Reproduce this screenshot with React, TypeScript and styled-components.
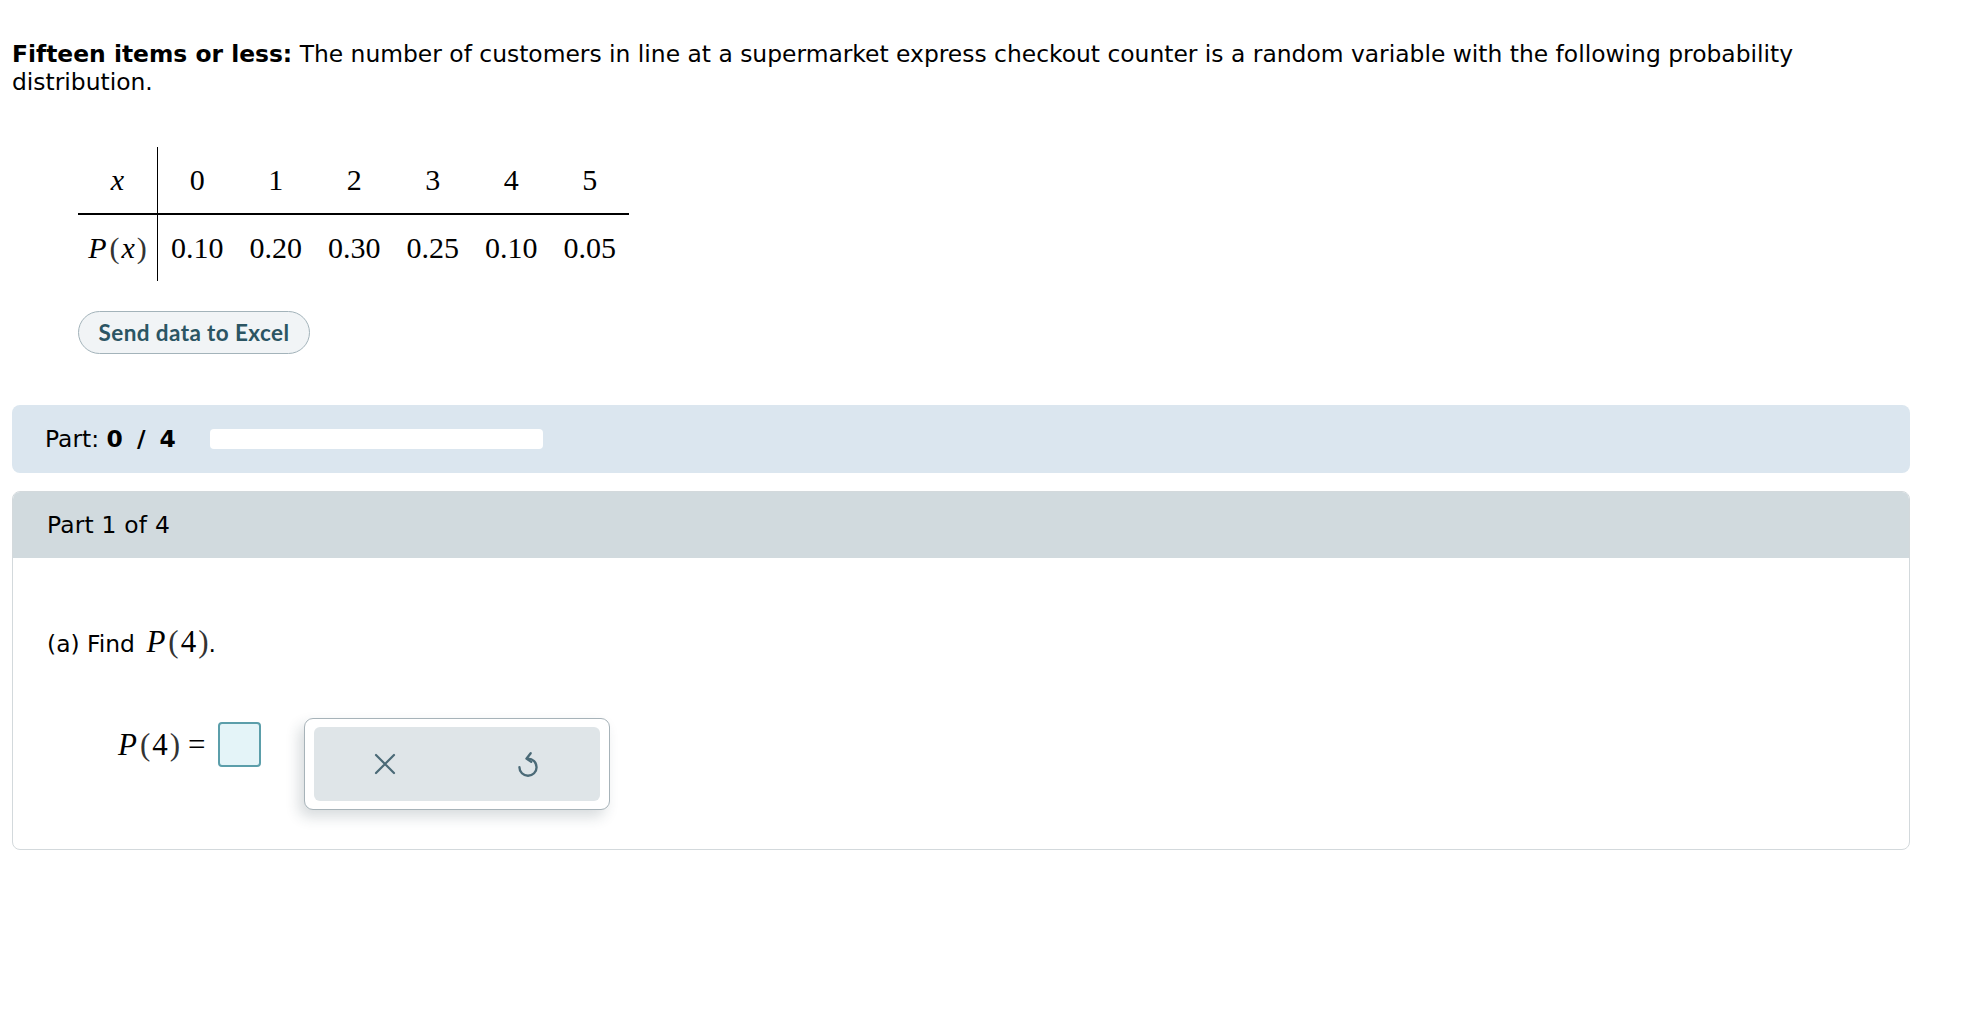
import React from 'react';
import styled, { createGlobalStyle } from 'styled-components';

const Global = createGlobalStyle`
  html, body { margin: 0; padding: 0; background: #ffffff; }
  body { font-family: "DejaVu Sans", Verdana, sans-serif; color: #000; }
`;

const Page = styled.div`
  width: 1898px;
  padding: 41px 0 60px 12px;
`;

const Prompt = styled.p`
  margin: 0;
  font-size: 23.4px;
  line-height: 27.5px;
`;

const Math = styled.span`
  font-family: "Liberation Serif", "Times New Roman", serif;
  font-size: 31px;
  line-height: 1;
  margin-left: 4px;
`;

const Var = styled.i`
  font-style: italic;
  margin-right: 3px;
`;

const Paren = styled.span<{ $open?: boolean }>`
  color: #333;
  margin: ${p => (p.$open ? '0 2px 0 0' : '0 0 0 2px')};
`;

const DistTable = styled.table`
  border-collapse: collapse;
  margin: 51px 0 0 66px;
  font-family: "Liberation Serif", "Times New Roman", serif;
  font-size: 30px;
`;

const Cell = styled.td<{ $head?: boolean; $label?: boolean }>`
  height: 66px;
  padding: 0;
  text-align: center;
  vertical-align: middle;
  white-space: nowrap;
  width: ${p => (p.$label ? '79px' : '78.5px')};
  ${p => (p.$label ? 'border-right: 1px solid #000;' : '')}
  ${p => (p.$head ? 'border-bottom: 2px solid #000;' : '')}
`;

const ExcelButton = styled.button`
  display: block;
  margin: 30px 0 0 66px;
  width: 232px;
  height: 43px;
  padding: 0;
  border: 1px solid #a3b3ba;
  border-radius: 22px;
  background: #f1f4f6;
  color: #2b5563;
  font-family: Lato, "Open Sans", sans-serif;
  font-weight: 700;
  font-size: 22.5px;
  letter-spacing: 0.4px;
`;

const ProgressBar = styled.div`
  margin-top: 51px;
  height: 68px;
  border-radius: 8px;
  background: #dbe6ef;
  padding-left: 33px;
  display: flex;
  align-items: center;
  font-size: 23.4px;
`;

const Bold = styled.b`
  font-weight: 700;
`;

const Fraction = styled.b`
  font-weight: 700;
  letter-spacing: 3px;
`;

const Track = styled.div`
  margin-left: 31px;
  width: 333px;
  height: 20px;
  border-radius: 4px;
  background: #ffffff;
`;

const Card = styled.section`
  margin-top: 18px;
  border: 1px solid #d3d9dc;
  border-radius: 8px;
  overflow: hidden;
`;

const CardHeader = styled.div`
  height: 66px;
  background: #d1dade;
  padding-left: 34px;
  display: flex;
  align-items: center;
  font-size: 23.4px;
  letter-spacing: 0.2px;
`;

const CardBody = styled.div`
  padding: 68px 34px 39px 34px;
`;

const Question = styled.div`
  font-size: 23.4px;
  line-height: 32px;
`;

const AnswerRow = styled.div`
  margin: 58px 0 0 71px;
  display: flex;
  align-items: flex-start;
`;

const Equation = styled.div`
  display: flex;
  align-items: center;
  margin-top: 4px;
  font-family: "Liberation Serif", "Times New Roman", serif;
  font-size: 31px;
`;

const Equals = styled.span`
  margin: 0 12px 0 8px;
`;

const InputBox = styled.div`
  width: 43px;
  height: 45px;
  box-sizing: border-box;
  border: 2px solid #5b9eaa;
  border-radius: 4px;
  background: #e4f4f8;
`;

const ToolPanel = styled.div`
  margin-left: 43px;
  width: 306px;
  height: 92px;
  box-sizing: border-box;
  padding: 8px 9px;
  border: 1px solid #a7b3b9;
  border-radius: 9px;
  background: #ffffff;
  box-shadow: -5px 7px 14px rgba(40, 60, 70, 0.18);
`;

const ToolInner = styled.div`
  height: 100%;
  border-radius: 6px;
  background: #dfe5e8;
  display: grid;
  grid-template-columns: 1fr 1fr;
  align-items: center;
  justify-items: center;
`;

const ToolButton = styled.span`
  display: flex;
  align-items: center;
  justify-content: center;
  width: 30px;
  height: 30px;
`;

const CloseIcon = () => (
  <svg width="22" height="22" viewBox="0 0 22 22" fill="none" stroke="#4b6a77" strokeWidth="2.2" strokeLinecap="round">
    <path d="M2 2 L20 20 M20 2 L2 20" />
  </svg>
);

const UndoIcon = () => (
  <svg width="24" height="30" viewBox="0 0 22 28" fill="none" stroke="#4b6a77" strokeWidth="2.2" strokeLinecap="round" strokeLinejoin="round">
    <path d="M11 9 A8 8 0 1 1 3 17" />
    <path d="M13.5 4 L9.5 9 L14 12" />
  </svg>
);

const xs = ['0', '1', '2', '3', '4', '5'];
const ps = ['0.10', '0.20', '0.30', '0.25', '0.10', '0.05'];

export default function App() {
  return (
    <Page>
      <Global />
      <Prompt>
        <Bold>Fifteen items or less:</Bold> The number of customers in line at a supermarket express checkout counter is a random variable with the following probability distribution.
      </Prompt>
      <DistTable>
        <tbody>
          <tr>
            <Cell $head $label><i>x</i></Cell>
            {xs.map((v, i) => (
              <Cell $head key={i}>{v}</Cell>
            ))}
          </tr>
          <tr>
            <Cell $label><Var>P</Var><Paren $open>(</Paren><i>x</i><Paren>)</Paren></Cell>
            {ps.map((v, i) => (
              <Cell key={i}>{v}</Cell>
            ))}
          </tr>
        </tbody>
      </DistTable>
      <ExcelButton>Send data to Excel</ExcelButton>
      <ProgressBar>
        <span>Part: <Fraction>0 / 4</Fraction></span>
        <Track />
      </ProgressBar>
      <Card>
        <CardHeader>Part 1 of 4</CardHeader>
        <CardBody>
          <Question>
            (a) Find <Math><Var>P</Var><Paren $open>(</Paren>4<Paren>)</Paren></Math>.
          </Question>
          <AnswerRow>
            <Equation>
              <Var>P</Var><Paren $open>(</Paren>4<Paren>)</Paren>
              <Equals>=</Equals>
              <InputBox />
            </Equation>
            <ToolPanel>
              <ToolInner>
                <ToolButton><CloseIcon /></ToolButton>
                <ToolButton><UndoIcon /></ToolButton>
              </ToolInner>
            </ToolPanel>
          </AnswerRow>
        </CardBody>
      </Card>
    </Page>
  );
}
